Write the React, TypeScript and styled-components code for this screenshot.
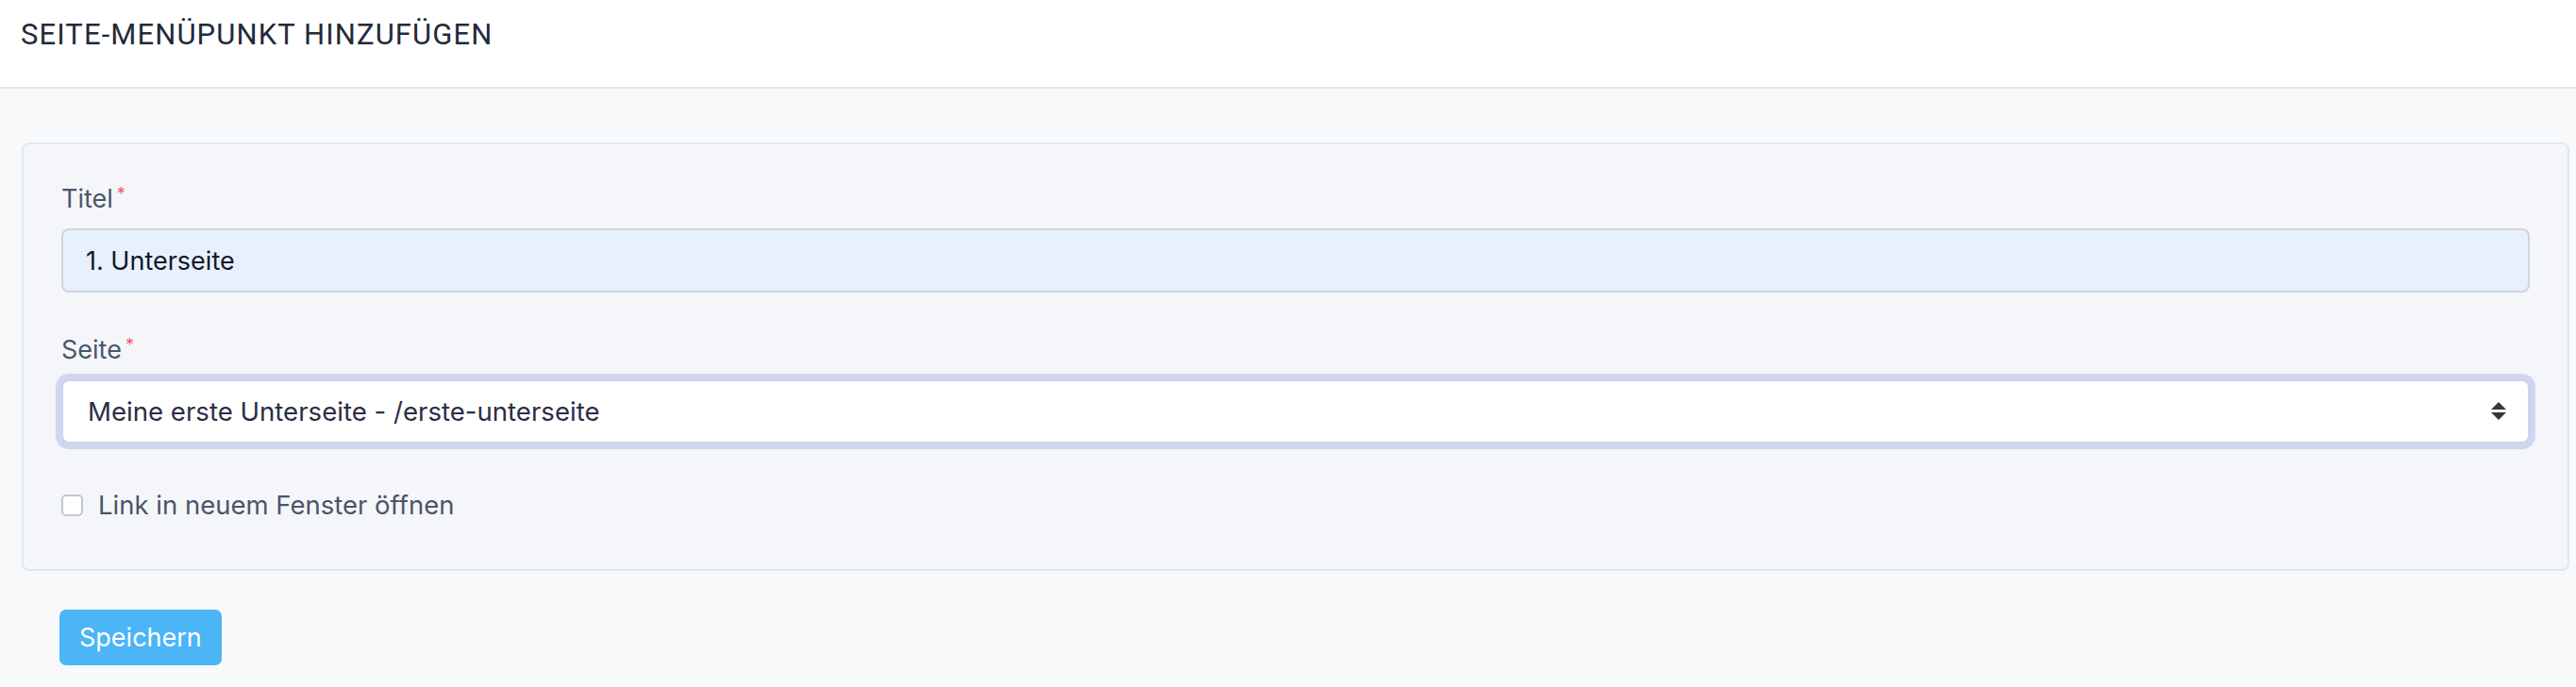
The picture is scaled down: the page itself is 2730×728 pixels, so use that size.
import React from "react";
import styled, { createGlobalStyle } from "styled-components";

const GlobalStyle = createGlobalStyle`
  html, body {
    margin: 0;
    padding: 0;
    background: #f8f9fb;
  }
  body {
    font-family: Inter, "Noto Sans", sans-serif;
    -webkit-font-smoothing: antialiased;
  }
  * { box-sizing: border-box; }
`;

const Page = styled.div`
  min-height: 728px;
  background: #f8f9fb;
`;

const Header = styled.header`
  height: 94px;
  background: #ffffff;
  border-bottom: 2px solid #e2e8f0;
  padding: 19px 22px 0;
`;

const Title = styled.h1`
  margin: 0;
  font-family: Roboto, "Liberation Sans", sans-serif;
  font-weight: 400;
  font-size: 31px;
  line-height: 36px;
  color: #232a3b;
  letter-spacing: 1.1px;
`;

const Main = styled.main`
  padding: 57px 7px 0 23px;
`;

const Panel = styled.section`
  background: #f4f6fa;
  border: 2px solid #e2e8f0;
  border-radius: 8px;
  padding: 38px 40px 48px;
  display: flex;
  flex-direction: column;
  gap: 41px;
`;

const Field = styled.div`
  display: flex;
  flex-direction: column;
  gap: 11px;
`;

const Label = styled.label`
  font-size: 27px;
  line-height: 40px;
  color: #4a5568;
  display: flex;
  align-items: flex-start;
`;

const Required = styled.span`
  color: #f2566f;
  font-size: 18px;
  line-height: 18px;
  margin-left: 4px;
  margin-top: 6px;
`;

const TextInput = styled.input`
  height: 68px;
  width: 100%;
  border: 2px solid #cfd5de;
  border-radius: 8px;
  background: #e8f0fe;
  padding: 0 24px;
  font-family: Inter, "Noto Sans", sans-serif;
  font-size: 27px;
  color: #111827;
  outline: none;
`;

const SelectWrap = styled.div`
  position: relative;
`;

const Select = styled.select`
  appearance: none;
  -webkit-appearance: none;
  height: 68px;
  width: 100%;
  border: 2px solid #cdd3ef;
  border-radius: 8px;
  background: #ffffff;
  box-shadow: 0 0 0 6px #d1d6f0;
  padding: 0 60px 0 26px;
  font-family: Inter, "Noto Sans", sans-serif;
  font-size: 27.6px;
  color: #2a2e45;
  outline: none;
`;

const Arrows = styled.svg`
  position: absolute;
  right: 25px;
  top: 50%;
  transform: translateY(-50%);
  pointer-events: none;
`;

const CheckRow = styled.label`
  display: flex;
  align-items: center;
  gap: 16px;
  margin-top: 4px;
  font-size: 27.5px;
  line-height: 40px;
  color: #4a5568;
`;

const Checkbox = styled.input`
  appearance: none;
  -webkit-appearance: none;
  margin: 0;
  width: 23px;
  height: 23px;
  border: 2px solid #c2c7ce;
  border-radius: 5px;
  background: #ffffff;
`;

const Actions = styled.div`
  padding: 41px 40px;
`;

const Button = styled.button`
  height: 59px;
  padding: 0 21px;
  border: none;
  border-radius: 7px;
  background: #4bb5f6;
  color: #ffffff;
  font-family: Inter, "Noto Sans", sans-serif;
  font-size: 27px;
  cursor: pointer;
`;

export default function App() {
  return (
    <Page>
      <GlobalStyle />
      <Header>
        <Title>SEITE-MENÜPUNKT HINZUFÜGEN</Title>
      </Header>
      <Main>
        <Panel>
          <Field>
            <Label htmlFor="titel">
              Titel<Required>*</Required>
            </Label>
            <TextInput id="titel" defaultValue="1. Unterseite" />
          </Field>
          <Field>
            <Label htmlFor="seite">
              Seite<Required>*</Required>
            </Label>
            <SelectWrap>
              <Select id="seite" defaultValue="1">
                <option value="1">Meine erste Unterseite - /erste-unterseite</option>
              </Select>
              <Arrows width="16" height="20" viewBox="0 0 16 20">
                <path d="M8 0 L16 8 L0 8 Z" fill="#343a40" />
                <path d="M0 11 L16 11 L8 19 Z" fill="#343a40" />
              </Arrows>
            </SelectWrap>
          </Field>
          <CheckRow>
            <Checkbox type="checkbox" />
            Link in neuem Fenster öffnen
          </CheckRow>
        </Panel>
        <Actions>
          <Button>Speichern</Button>
        </Actions>
      </Main>
    </Page>
  );
}
